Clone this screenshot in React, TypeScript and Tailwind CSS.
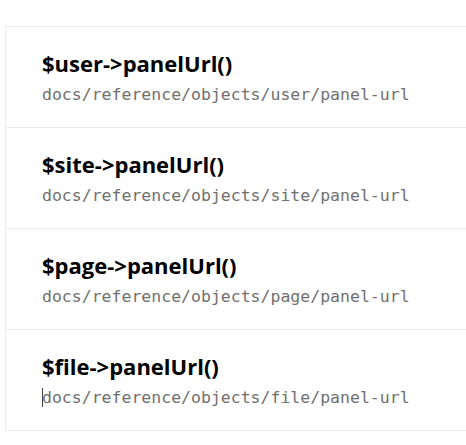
const items = ["user", "site", "page", "file"];

export default function App() {
  return (
    <div className="h-[445px] w-[466px] overflow-hidden bg-white pt-[26px] pl-[5px]">
      <ul className="border-t border-l border-[#ececec]">
        {items.map((name) => (
          <li key={name} className="h-[101px] border-b border-[#ececec] pt-[21px] pl-[36px]">
            <h3 className="font-['Open_Sans',sans-serif] text-[22px] font-bold leading-[30px] text-black">
              ${name}-&gt;panelUrl()
            </h3>
            <p className="mt-[5px] font-['DejaVu_Sans_Mono',monospace] text-[16.5px] leading-[24px] text-[#707070]">
              {name === "file" && (
                <span className="-mr-px inline-block h-[19px] w-px bg-[#444] align-[-4px]" />
              )}
              docs/reference/objects/{name}/panel-url
            </p>
          </li>
        ))}
      </ul>
    </div>
  );
}
